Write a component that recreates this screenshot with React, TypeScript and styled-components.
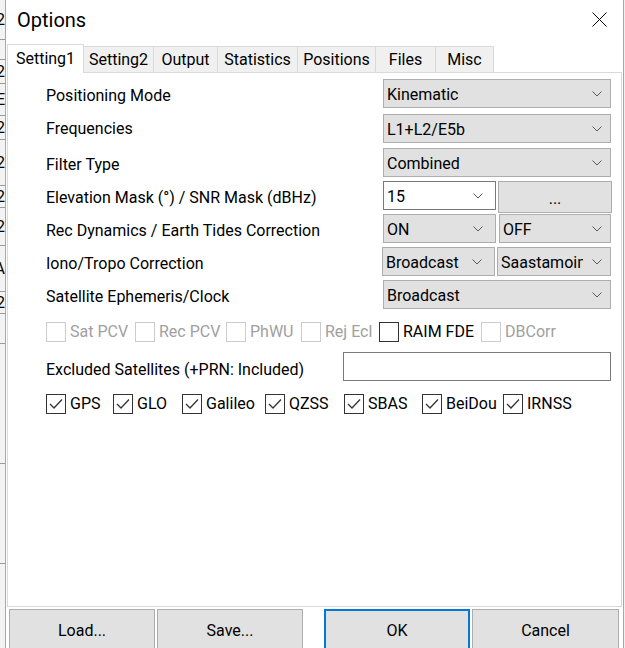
import React from "react";
import styled, { createGlobalStyle } from "styled-components";

const Global = createGlobalStyle`
  html, body { margin: 0; padding: 0; background: #fff; overflow: hidden; }
  body { font-family: Roboto, "Noto Sans", "Liberation Sans", sans-serif; color: #000; }
  * { box-sizing: border-box; }
`;

const Screen = styled.div`
  width: 625px;
  height: 648px;
  display: flex;
  overflow: hidden;
  background: #fff;
`;

const BackStrip = styled.div<{ $w: number }>`
  width: ${(p) => p.$w}px;
  flex: none;
  background: #f3f3f3;
  display: flex;
  flex-direction: column;
  overflow: hidden;
`;

const BackCell = styled.div<{ $h: number }>`
  height: ${(p) => p.$h}px;
  flex: none;
  border-bottom: 1px solid #9a9a9a;
  font-size: 16px;
  line-height: ${(p) => p.$h}px;
  white-space: nowrap;
  display: flex;
  justify-content: flex-end;
  overflow: hidden;
`;

const Window = styled.div`
  width: 619px;
  flex: none;
  border-left: 1px solid #a8a8a8;
  border-right: 1px solid #a8a8a8;
  background: #fff;
  display: flex;
  flex-direction: column;
`;

const TitleBar = styled.div`
  height: 44px;
  flex: none;
  display: flex;
  justify-content: space-between;
  align-items: flex-start;
  padding: 0 16px 0 11px;
`;

const Title = styled.div`
  font-size: 20px;
  line-height: 40px;
`;

const CloseIcon = styled.svg`
  margin-top: 12px;
  width: 15px;
  height: 15px;
`;

const TabBar = styled.div`
  height: 28px;
  flex: none;
  display: flex;
  align-items: flex-end;
  margin-left: 1px;
`;

const Tab = styled.div<{ $w: number; $active?: boolean }>`
  width: ${(p) => p.$w + 1}px;
  margin-right: -1px;
  height: ${(p) => (p.$active ? 29 : 26)}px;
  margin-bottom: ${(p) => (p.$active ? -1 : 0)}px;
  position: relative;
  z-index: ${(p) => (p.$active ? 2 : 1)};
  background: ${(p) => (p.$active ? "#fff" : "#f0f0f0")};
  border: 1px solid #d9d9d9;
  border-bottom: none;
  font-size: 16px;
  line-height: ${(p) => (p.$active ? 27 : 25)}px;
  text-align: center;
  white-space: nowrap;
`;

const Panel = styled.div`
  height: 535px;
  flex: none;
  margin: 0 1px;
  border: 1px solid #d9d9d9;
  background: #fff;
  padding: 6px 10px 0 38px;
  display: flex;
  flex-direction: column;
`;

const FieldRow = styled.div<{ $h: number; $right?: number }>`
  height: ${(p) => p.$h}px;
  flex: none;
  display: grid;
  grid-template-columns: 1fr ${(p) => p.$right ?? 228}px;
  align-items: start;
`;

const Label = styled.div<{ $lh?: number }>`
  font-size: 16px;
  line-height: ${(p) => p.$lh ?? 33}px;
  white-space: nowrap;
`;

const Pair = styled.div<{ $gap: number; $shift?: number }>`
  display: flex;
  gap: ${(p) => p.$gap}px;
  margin-left: ${(p) => p.$shift ?? 0}px;
`;

const ComboBox = styled.div<{ $edit?: boolean; $w?: number; $h?: number }>`
  width: ${(p) => (p.$w ? `${p.$w}px` : "100%")};
  height: ${(p) => p.$h ?? 29}px;
  flex: none;
  display: flex;
  align-items: center;
  padding: 2px 0 0 3px;
  background: ${(p) => (p.$edit ? "#fff" : "#e1e1e1")};
  border: 1px solid ${(p) => (p.$edit ? "#7a7a7a" : "#adadad")};
  font-size: 16px;
  line-height: 19px;
`;

const ComboText = styled.span`
  flex: 1;
  min-width: 0;
  overflow: hidden;
  white-space: nowrap;
`;

const Chevron = styled.span<{ $w?: number }>`
  width: ${(p) => p.$w ?? 27}px;
  flex: none;
  display: flex;
  justify-content: center;
  align-items: center;
  padding-bottom: 2px;
`;

const PushButton = styled.div<{ $w: number; $h: number }>`
  width: ${(p) => p.$w}px;
  height: ${(p) => p.$h}px;
  flex: none;
  background: #e1e1e1;
  border: 1px solid #adadad;
  font-size: 16px;
  display: flex;
  align-items: center;
  justify-content: center;
  padding-top: 3px;
`;

const TextField = styled.div`
  height: 29px;
  border: 1px solid #7a7a7a;
  background: #fff;
`;

const CheckRow = styled.div<{ $h: number }>`
  height: ${(p) => p.$h}px;
  flex: none;
  display: flex;
  align-items: flex-start;
`;

const CheckItem = styled.div<{ $w?: number; $disabled?: boolean }>`
  width: ${(p) => (p.$w ? `${p.$w}px` : "auto")};
  flex: none;
  display: flex;
  align-items: center;
  gap: 4px;
  overflow: hidden;
  white-space: nowrap;
  font-size: 16px;
  line-height: 20px;
  color: ${(p) => (p.$disabled ? "#a0a0a0" : "#000")};
`;

const Box = styled.span<{ $disabled?: boolean }>`
  width: 20px;
  height: 20px;
  flex: none;
  border: 1px solid ${(p) => (p.$disabled ? "#cccccc" : "#333333")};
  background: #fff;
  display: flex;
  align-items: center;
  justify-content: center;
`;

const ButtonBar = styled.div`
  margin-top: 2px;
  display: flex;
  padding-left: 3px;
`;

const DialogButton = styled.div<{ $w: number; $gap: number; $default?: boolean }>`
  width: ${(p) => p.$w}px;
  height: 42px;
  flex: none;
  margin-left: ${(p) => p.$gap}px;
  background: #e1e1e1;
  border: ${(p) => (p.$default ? "2px solid #0078d7" : "1px solid #adadad")};
  font-size: 16px;
  display: flex;
  align-items: center;
  justify-content: center;
  padding-top: 1px;
`;

const RightStrip = styled.div`
  width: 5px;
  flex: none;
  background: #f0f0f0;
`;

const ChevronIcon = () => (
  <svg width="10" height="6" viewBox="0 0 10 6">
    <polyline points="0.5,0.5 5,5 9.5,0.5" fill="none" stroke="#5a5a5a" strokeWidth="1" />
  </svg>
);

const CheckIcon = () => (
  <svg width="14" height="12" viewBox="0 0 14 12">
    <polyline points="1,6 5,10 13,1.5" fill="none" stroke="#333" strokeWidth="1.3" />
  </svg>
);

const Combo = ({ text, w, edit, chev }: { text: string; w?: number; edit?: boolean; chev?: number }) => (
  <ComboBox $w={w} $edit={edit}>
    <ComboText>{text}</ComboText>
    <Chevron $w={chev}>
      <ChevronIcon />
    </Chevron>
  </ComboBox>
);

const Check = ({ label, w, checked, disabled }: { label: string; w?: number; checked?: boolean; disabled?: boolean }) => (
  <CheckItem $w={w} $disabled={disabled}>
    <Box $disabled={disabled}>{checked && <CheckIcon />}</Box>
    <span>{label}</span>
  </CheckItem>
);

const tabs: [string, number][] = [
  ["Setting1", 76],
  ["Setting2", 70],
  ["Output", 64],
  ["Statistics", 80],
  ["Positions", 78],
  ["Files", 60],
  ["Misc", 58],
];

const backCells: [number, string][] = [
  [40, "2"],
  [20, ""],
  [24, "2"],
  [32, "E"],
  [24, "2"],
  [46, "2"],
  [22, "2"],
  [38, "2"],
  [46, "A"],
  [22, "2"],
  [30, ""],
  [120, ""],
  [100, ""],
  [120, ""],
];

const sats: [string, number][] = [
  ["GPS", 67],
  ["GLO", 69],
  ["Galileo", 83],
  ["QZSS", 79],
  ["SBAS", 78],
  ["BeiDou", 81],
  ["IRNSS", 0],
];

export default function App() {
  return (
    <>
      <Global />
      <Screen>
        <BackStrip $w={5}>
          {backCells.map(([h, c], i) => (
            <BackCell key={i} $h={h}>
              {c}
            </BackCell>
          ))}
        </BackStrip>
        <Window>
          <TitleBar>
            <Title>Options</Title>
            <CloseIcon viewBox="0 0 15 15">
              <line x1="0.5" y1="0.5" x2="14.5" y2="14.5" stroke="#000" strokeWidth="1" />
              <line x1="14.5" y1="0.5" x2="0.5" y2="14.5" stroke="#000" strokeWidth="1" />
            </CloseIcon>
          </TitleBar>
          <TabBar>
            {tabs.map(([t, w], i) => (
              <Tab key={t} $w={w} $active={i === 0}>
                {t}
              </Tab>
            ))}
          </TabBar>
          <Panel>
            <FieldRow $h={35}>
              <Label>Positioning Mode</Label>
              <Combo text="Kinematic" />
            </FieldRow>
            <FieldRow $h={34}>
              <Label $lh={29}>Frequencies</Label>
              <Combo text="L1+L2/E5b" />
            </FieldRow>
            <FieldRow $h={33}>
              <Label>Filter Type</Label>
              <Combo text="Combined" />
            </FieldRow>
            <FieldRow $h={33}>
              <Label>Elevation Mask (°) / SNR Mask (dBHz)</Label>
              <Pair $gap={2}>
                <Combo text="15" w={113} edit chev={35} />
                <PushButton $w={114} $h={32}>...</PushButton>
              </Pair>
            </FieldRow>
            <FieldRow $h={33}>
              <Label>Rec Dynamics / Earth Tides Correction</Label>
              <Pair $gap={3}>
                <Combo text="ON" w={113} chev={35} />
                <Combo text="OFF" w={112} />
              </Pair>
            </FieldRow>
            <FieldRow $h={33}>
              <Label>Iono/Tropo Correction</Label>
              <Pair $gap={2} $shift={-1}>
                <Combo text="Broadcast" w={113} chev={35} />
                <Combo text="Saastamoinen" w={114} />
              </Pair>
            </FieldRow>
            <FieldRow $h={42}>
              <Label>Satellite Ephemeris/Clock</Label>
              <Combo text="Broadcast" />
            </FieldRow>
            <CheckRow $h={30}>
              <Check label="Sat PCV" w={89} disabled />
              <Check label="Rec PCV" w={91} disabled />
              <Check label="PhWU" w={75} disabled />
              <Check label="Rej Ecl" w={78} disabled />
              <Check label="RAIM FDE" w={102} />
              <Check label="DBCorr" disabled />
            </CheckRow>
            <FieldRow $h={42} $right={268}>
              <Label $lh={35}>Excluded Satellites (+PRN: Included)</Label>
              <TextField />
            </FieldRow>
            <CheckRow $h={20}>
              {sats.map(([s, w]) => (
                <Check key={s} label={s} w={w || undefined} checked />
              ))}
            </CheckRow>
          </Panel>
          <ButtonBar>
            <DialogButton $w={146} $gap={0}>Load...</DialogButton>
            <DialogButton $w={146} $gap={2}>Save...</DialogButton>
            <DialogButton $w={146} $gap={21} $default>OK</DialogButton>
            <DialogButton $w={147} $gap={2}>Cancel</DialogButton>
          </ButtonBar>
        </Window>
        <RightStrip />
      </Screen>
    </>
  );
}
